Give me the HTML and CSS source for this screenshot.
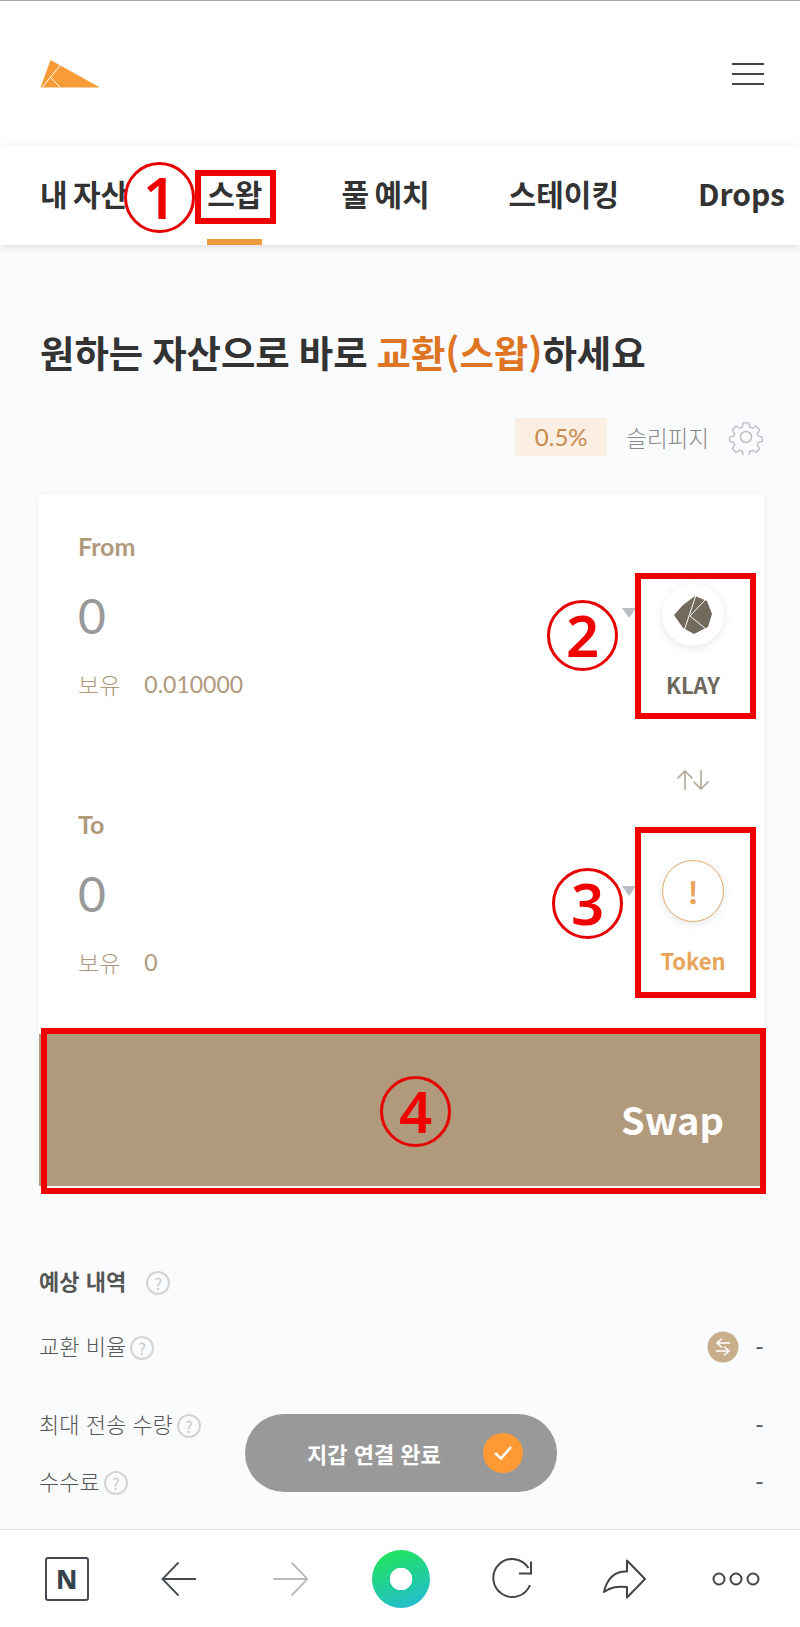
FILE: index.html
```html
<!DOCTYPE html>
<html lang="ko">
<head>
    <meta charset="utf-8">
    <title>스왑</title>
    <link rel="stylesheet" href="styles.css">
</head>
<body>
    <div class="header">
        <svg class="logo" width="60" height="28" viewBox="0 0 60 28">
            <polygon points="10.5,0 60,27.5 0.5,27.5" fill="#f79c38"/>
            <path d="M20.5 5 L2 27.5 M10 17 L20.5 27.5" stroke="#fff" stroke-width="1" fill="none"/>
        </svg>
        <div class="burger"><span></span><span></span><span></span></div>
    </div>

    <div class="tabs">
        <div class="tab">내 자산</div>
        <div class="tab active">스왑</div>
        <div class="tab">풀 예치</div>
        <div class="tab">스테이킹</div>
        <div class="tab">Drops</div>
    </div>

    <div class="main">
        <h1 class="title">원하는 자산으로 바로 <em>교환(스왑)</em>하세요</h1>

        <div class="slippage">
            <span class="chip">0.5%</span>
            <span class="slippage-label">슬리피지</span>
            <svg width="36" height="36" viewBox="0 0 36 36" fill="none" stroke="#b9bec4" stroke-width="1.5" stroke-linejoin="round">
                <circle cx="18" cy="18" r="5.5"/>
                <path d="M15 2.5h6l1 4.6 3 1.3 4-2.5 4 4.4-2.6 3.9 1.2 2.9 4.4 1v4.8l-4.4 1-1.2 2.9 2.6 3.9-4 4.4-4-2.5-3 1.3-1 4.6h-6l-1-4.6-3-1.3-4 2.5-4-4.4 2.6-3.9-1.2-2.9-4.4-1v-4.8l4.4-1 1.2-2.9-2.6-3.9 4-4.4 4 2.5 3-1.3z" transform="translate(1.6 1.6) scale(.91)"/>
            </svg>
        </div>

        <div class="card">
            <div class="field">
                <div class="field-left">
                    <div class="field-label">From</div>
                    <div class="amount">0</div>
                    <div class="balance"><span>보유</span><b>0.010000</b></div>
                </div>
                <div class="caret"></div>
                <div class="token">
                    <div class="token-icon">
                        <svg width="40" height="40" viewBox="0 0 40 40">
                            <polygon points="22,1 34,6 39,19 35,32 21,39 10,33 1,20 10,10" fill="#736a5e"/>
                            <path d="M23 0 L11 36 M32 5 L17 21 L33 34" stroke="#fff" stroke-width="1" fill="none"/>
                        </svg>
                    </div>
                    <div class="token-name">KLAY</div>
                </div>
            </div>

            <div class="flip">
                <svg width="34" height="22" viewBox="0 0 34 22" fill="none" stroke="#b5a794" stroke-width="1.6">
                    <path d="M9 21V2M1.5 9.5L9 2l7.5 7.5M25 1v19M17.5 12.5L25 20l7.500-7.500"/>
                </svg>
            </div>

            <div class="field">
                <div class="field-left">
                    <div class="field-label">To</div>
                    <div class="amount">0</div>
                    <div class="balance"><span>보유</span><b>0</b></div>
                </div>
                <div class="caret"></div>
                <div class="token">
                    <div class="token-icon unknown">!</div>
                    <div class="token-name unknown-name">Token</div>
                </div>
            </div>

            <div class="swap-btn">Swap</div>
        </div>

        <div class="details">
            <div class="details-title">예상 내역 <span class="help help-title">?</span></div>
            <div class="row first">
                <div class="row-label">교환 비율<span class="help">?</span></div>
                <div class="row-value">
                    <svg class="rate-icon" width="32" height="32" viewBox="0 0 32 32">
                        <circle cx="16" cy="16" r="15.500" fill="#c9ae8c"/>
                        <path d="M23 12H10M15 7.500L10 12l5 4.500M9 20h13M17 15.500L22 20l-5 4.500" stroke="#fff" stroke-width="1.600" fill="none"/>
                    </svg>
                    <span class="dash">-</span>
                </div>
            </div>
            <div class="row second">
                <div class="row-label">최대 전송 수량<span class="help">?</span></div>
                <div class="row-value"><span class="dash">-</span></div>
            </div>
            <div class="row third">
                <div class="row-label">수수료<span class="help">?</span></div>
                <div class="row-value"><span class="dash">-</span></div>
            </div>
        </div>
    </div>

    <div class="toast">
        <span>지갑 연결 완료</span>
        <span class="toast-check">
            <svg width="20" height="16" viewBox="0 0 20 16" fill="none" stroke="#fff" stroke-width="2.600">
                <path d="M2 8l6 5.500L18 2"/>
            </svg>
        </span>
    </div>

    <div class="toolbar">
        <div class="n-box">N</div>
        <svg width="36" height="34" viewBox="-1 0 36 34" fill="none" stroke="#444b52" stroke-width="1.800" stroke-linecap="round">
            <path d="M35 17H1.500M17 1L1.500 17 17 33"/>
        </svg>
        <svg width="36" height="34" viewBox="-1 0 36 34" fill="none" stroke="#bbb" stroke-width="1.800" stroke-linecap="round">
            <path d="M1 17h33.500M19 1l15.500 16L19 33"/>
        </svg>
        <div class="home"></div>
        <svg width="42" height="42" viewBox="0 0 42 42" fill="none" stroke="#444" stroke-width="2">
            <path d="M38 27A19 19 0 1 1 36.500 10"/>
            <path d="M39 3.500V15.500H27"/>
        </svg>
        <svg width="44" height="40" viewBox="0 0 44 40" fill="none" stroke="#444" stroke-width="2" stroke-linejoin="round">
            <path d="M25 1.500L43 20 25 38.500V28C15 27 9 28 2 33C5 20 12 12 25 12.500Z"/>
        </svg>
        <svg width="48" height="14" viewBox="0 0 48 14" fill="none" stroke="#444" stroke-width="2">
            <circle cx="7" cy="7" r="5.500"/><circle cx="24" cy="7" r="5.500"/><circle cx="41" cy="7" r="5.500"/>
        </svg>
    </div>

    <!-- 안내 표시 -->
    <div class="mark mark-1"></div>
    <div class="mark mark-2"></div>
    <div class="mark mark-3"></div>
    <div class="mark mark-4"></div>
    <div class="num num-1">1</div>
    <div class="num num-2">2</div>
    <div class="num num-3">3</div>
    <div class="num num-4">4</div>
</body>
</html>
```

FILE: styles.css
```css
* {
    box-sizing: border-box;
}
body {
    position: relative;
    display: flex;
    flex-direction: column;
    width: 800px;
    height: 1627px;
    margin: 0;
    overflow: hidden;
    font-family: "Noto Sans CJK KR", "Noto Sans", sans-serif;
    color: #333;
    background-color: #fafbfd;
    border-top: 1px solid #aaa;
}
.header {
    display: flex;
    justify-content: space-between;
    align-items: center;
    height: 145px;
    padding: 0 36px 0 40px;
    background: white;
}
.logo {
    margin-top: 1px;
}
.burger {
    display: flex;
    flex-direction: column;
    gap: 8px;
    width: 32px;
}
.burger span {
    height: 2px;
    background: #444;
}
.tabs {
    display: flex;
    gap: 79px;
    height: 99px;
    padding-left: 40px;
    background: white;
    box-shadow: 0 2px 8px rgba(0,0,0,0.12);
    white-space: nowrap;
}
.tab {
    height: 99px;
    padding-top: 25px;
    font-size: 30px;
    line-height: 44px;
    font-weight: 700;
    word-spacing: -3px;
}
.tab.active {
    border-bottom: 6px solid #f09a3e;
}
.main {
    flex: 1;
    padding: 0 36px 0 39px;
}
.title {
    margin: 82px 0 0 1px;
    font-size: 37.4px;
    line-height: 50px;
    font-weight: 700;
    word-spacing: -1.5px;
    white-space: nowrap;
}
.title em {
    font-style: normal;
    color: #dd7525;
}
.slippage {
    display: flex;
    justify-content: flex-end;
    align-items: center;
    height: 38px;
    margin-top: 41px;
}
.chip {
    width: 92px;
    height: 38px;
    line-height: 38px;
    text-align: center;
    font-family: Lato, sans-serif;
    font-size: 24px;
    color: #c98a4e;
    background: #fbeee2;
}
.slippage-label {
    margin: 0 19px 0 19px;
    font-size: 22.5px;
    font-weight: 300;
    color: #888;
}
.card {
    margin-top: 39px;
    background: white;
    box-shadow: 0 0 10px rgba(0,0,0,0.04);
}
.field {
    display: flex;
    padding: 35px 38px 0 39px;
}
.field-left {
    flex: 1;
}
.field-label {
    height: 32px;
    font-family: Lato, sans-serif;
    font-size: 25px;
    line-height: 32px;
    font-weight: 700;
    color: #b09a7b;
}
.amount {
    height: 56px;
    margin-top: 26px;
    font-family: Lato, sans-serif;
    font-size: 48px;
    line-height: 56px;
    color: #999;
}
.balance {
    display: flex;
    gap: 24px;
    height: 30px;
    margin-top: 25px;
    font-size: 23px;
    line-height: 30px;
    font-weight: 300;
    color: #b09a7b;
}
.balance b {
    font-family: Lato, sans-serif;
    font-weight: 400;
}
.caret {
    width: 0;
    height: 0;
    margin: 78px 24px 0 0;
    border-left: 7px solid transparent;
    border-right: 7px solid transparent;
    border-top: 10px solid #b9bec6;
}
.token {
    width: 66px;
    text-align: center;
}
.token-icon {
    display: flex;
    justify-content: center;
    align-items: center;
    width: 62px;
    height: 62px;
    margin: 54px auto 0;
    border-radius: 50%;
    background: white;
    box-shadow: 0 2px 8px rgba(0,0,0,0.1);
}
.token-icon.unknown {
    margin-top: 52px;
    font-size: 30px;
    font-weight: 700;
    color: #e8a55a;
    border: 1px solid #e0ac6c;
}
.token-name {
    margin-top: 23px;
    font-size: 22px;
    line-height: 30px;
    font-weight: 700;
    color: #6e675c;
}
.token-name.unknown-name {
    color: #e8a55a;
}
.flip {
    display: flex;
    justify-content: flex-end;
    height: 74px;
    padding: 70px 54px 0 0;
}
.swap-btn {
    height: 152px;
    margin-top: 57px;
    padding: 59px 40px 0 0;
    text-align: right;
    font-size: 38px;
    line-height: 52px;
    font-weight: 700;
    color: white;
    background: #b09a7b;
}
.details {
    margin-top: 77px;
}
.details-title {
    font-size: 22px;
    line-height: 34px;
    font-weight: 700;
    color: #555;
}
.help {
    display: inline-block;
    width: 24px;
    height: 24px;
    margin-left: 4px;
    border: 2px solid #d4d4d4;
    border-radius: 50%;
    font-size: 16px;
    line-height: 20px;
    font-weight: 400;
    text-align: center;
    color: #c8c8c8;
}
.help-title {
    margin-left: 14px;
}
.row {
    display: flex;
    justify-content: space-between;
    align-items: center;
    height: 34px;
    font-size: 22px;
    font-weight: 300;
    color: #555;
}
.row.first {
    margin-top: 31px;
}
.row.second {
    margin-top: 44px;
}
.row.third {
    margin-top: 23px;
}
.row-value {
    display: flex;
    align-items: center;
    gap: 16px;
}
.rate-icon {
    margin-top: 3px;
}
.dash {
    font-family: Lato, sans-serif;
    font-size: 24px;
    font-weight: 400;
}
.toast {
    position: absolute;
    left: 245px;
    top: 1413px;
    display: flex;
    justify-content: space-between;
    align-items: center;
    width: 312px;
    height: 78px;
    padding: 0 34px 0 62px;
    border-radius: 39px;
    font-size: 22px;
    font-weight: 700;
    color: white;
    background: #999;
}
.toast-check {
    display: flex;
    justify-content: center;
    align-items: center;
    width: 40px;
    height: 40px;
    border-radius: 50%;
    background: #ff9933;
}
.toolbar {
    display: grid;
    grid-template-columns: repeat(7, 111.5px);
    justify-items: center;
    align-items: center;
    height: 98px;
    padding-left: 11px;
    background: white;
    border-top: 1px solid #ddd;
}
.n-box {
    width: 44px;
    height: 44px;
    border: 2px solid #444b52;
    border-radius: 3px;
    font-family: "Noto Sans", sans-serif;
    font-size: 26px;
    line-height: 40px;
    font-weight: 800;
    text-align: center;
    color: #36424c;
}
.home {
    width: 58px;
    height: 58px;
    border-radius: 50%;
    background: radial-gradient(circle, white 0 11px, transparent 11.5px), linear-gradient(160deg, #1ee850, #25b8dc);
}
/* 빨간 안내 표시 */
.mark {
    position: absolute;
    border: 6px solid #f00000;
}
.mark-1 {
    left: 195px;
    top: 169px;
    width: 81px;
    height: 54px;
}
.mark-2 {
    left: 635px;
    top: 572px;
    width: 121px;
    height: 146px;
}
.mark-3 {
    left: 635px;
    top: 826px;
    width: 121px;
    height: 171px;
}
.mark-4 {
    left: 41px;
    top: 1027px;
    width: 725px;
    height: 166px;
}
.num {
    position: absolute;
    width: 71px;
    height: 71px;
    border: 3px solid #e60000;
    border-radius: 50%;
    font-family: "Noto Sans", sans-serif;
    font-size: 58px;
    line-height: 63px;
    font-weight: 600;
    text-align: center;
    color: #f00000;
}
.num-1 {
    left: 124px;
    top: 161px;
}
.num-2 {
    left: 547px;
    top: 599px;
}
.num-3 {
    left: 552px;
    top: 867px;
}
.num-4 {
    left: 380px;
    top: 1075px;
}
```
